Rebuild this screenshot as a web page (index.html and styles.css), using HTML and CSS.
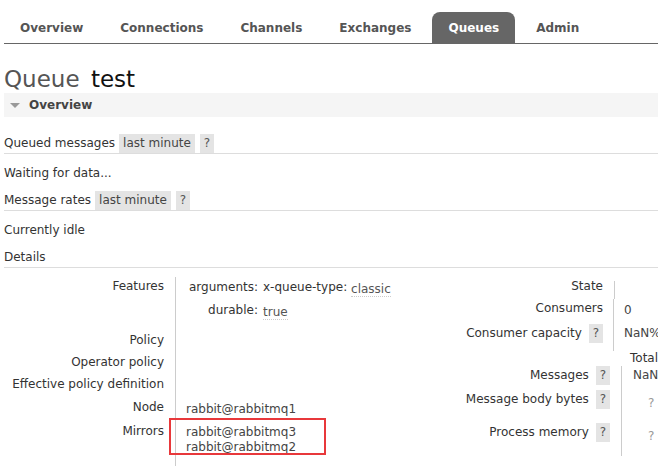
FILE: index.html
```html
<!DOCTYPE html>
<html>
<head>
<meta charset="utf-8">
<link rel="stylesheet" href="styles.css">
</head>
<body>
<div class="page">
  <nav class="tabs">
    <a class="tab">Overview</a>
    <a class="tab">Connections</a>
    <a class="tab">Channels</a>
    <a class="tab">Exchanges</a>
    <a class="tab active">Queues</a>
    <a class="tab">Admin</a>
  </nav>
  <h1 class="title"><span class="title-kind">Queue</span> <span class="title-name">test</span></h1>
  <div class="section-head"><span class="tri"></span>Overview</div>

  <div class="sub first"><span>Queued messages</span><span class="pill">last minute</span><span class="help">?</span></div>
  <p class="note">Waiting for data...</p>
  <div class="sub"><span>Message rates</span><span class="pill">last minute</span><span class="help">?</span></div>
  <p class="note">Currently idle</p>
  <div class="sub">Details</div>

  <div class="details">
    <div class="facts">
      <div class="lbl r-feat">Features</div>
      <div class="val r-feat">
        <div class="args">
          <span class="k">arguments:</span>
          <span class="v"><span class="k2">x-queue-type:</span> <span class="abbr">classic</span></span>
          <span class="k">durable:</span>
          <span class="v"><span class="abbr">true</span></span>
        </div>
      </div>
      <div class="lbl">Policy</div><div class="val"></div>
      <div class="lbl">Operator policy</div><div class="val"></div>
      <div class="lbl">Effective policy definition</div><div class="val"></div>
      <div class="lbl">Node</div><div class="val"><span class="shift">rabbit@rabbitmq1</span></div>
      <div class="lbl">Mirrors</div>
      <div class="val mirrors">
        <div class="mirror-list">rabbit@rabbitmq3<br>rabbit@rabbitmq2</div>
        <div class="mark"></div>
      </div>
    </div>

    <div class="side">
      <div class="facts2">
        <div class="lbl">State</div><div class="val first-val"></div>
        <div class="lbl">Consumers</div><div class="val"><span class="shift">0</span></div>
        <div class="lbl">Consumer capacity <span class="help">?</span></div><div class="val">NaN%</div>
      </div>
      <div class="facts3">
        <div class="hlbl"></div><div class="hval">Total</div>
        <div class="lbl">Messages <span class="help">?</span></div><div class="val">NaN</div>
        <div class="lbl">Message body bytes <span class="help">?</span></div><div class="val"><span class="unk">?</span></div>
        <div class="lbl">Process memory <span class="help">?</span></div><div class="val"><span class="unk">?</span></div>
      </div>
    </div>
  </div>
</div>
</body>
</html>
```

FILE: styles.css
```css
html, body {
  margin: 0;
  padding: 0;
  background: #fff;
  overflow: hidden;
}

body {
  font-family: "DejaVu Sans", Verdana, sans-serif;
  font-size: 12px;
  color: #333;
}

.page {
  width: 658px;
  height: 469px;
  overflow: hidden;
}

/* tabs */
.tabs {
  display: flex;
  margin: 12px 0 0 4px;
  border-bottom: 1px solid #666;
}

.tab {
  display: block;
  height: 29px;
  padding: 2px 16px 0;
  line-height: 29px;
  margin-right: 5px;
  font-weight: bold;
  color: #555;
  border-radius: 8px 8px 0 0;
  white-space: nowrap;
}

.tab.active {
  background: #666;
  color: #fff;
}

/* title */
.title {
  margin: 22px 0 0 4px;
  font-size: 23px;
  line-height: 26px;
  font-weight: normal;
  white-space: nowrap;
}

.title-kind { color: #555; }
.title-name { color: #111; margin-left: 4px; }

.section-head {
  margin: 1px 0 0 4px;
  height: 24px;
  line-height: 24px;
  background: #f5f5f5;
  font-weight: bold;
  color: #444;
  display: flex;
  align-items: center;
}

.tri {
  width: 0;
  height: 0;
  margin: 0 9px 0 6px;
  border-left: 5px solid transparent;
  border-right: 5px solid transparent;
  border-top: 5px solid #999;
}

/* sub headings */
.sub {
  margin: 8px 0 0 4px;
  height: 19px;
  line-height: 19px;
  border-bottom: 1px solid #ddd;
  display: flex;
  gap: 4px;
  white-space: nowrap;
}

.sub.first { margin-top: 17px; }

.pill {
  background: #e4e4e4;
  padding: 0 4px;
  color: #444;
}

.help {
  display: inline-block;
  background: #e4e4e4;
  padding: 0 4px;
  color: #555;
  line-height: 19px;
}

.sub .help { margin-left: 1px; }

.note {
  margin: 10px 0 0 4px;
  line-height: 19px;
}

/* details */
.details {
  display: flex;
  margin: 9px 0 0 4px;
  width: 720px;
}

.facts {
  display: grid;
  grid-template-columns: 171px 235px;
  grid-template-rows: 54px 22px 22px 23px 24px 44px;
  width: 416px;
}

.lbl {
  text-align: right;
  padding-right: 11px;
  line-height: 18px;
  white-space: nowrap;
}

.val {
  border-left: 1px solid #ccc;
  padding-left: 10px;
  line-height: 18px;
  white-space: nowrap;
  color: #444;
}

.shift {
  display: inline-block;
  padding-top: 2px;
}

.args {
  display: grid;
  grid-template-columns: 72px auto;
  column-gap: 5px;
  row-gap: 5px;
  padding-top: 1px;
}

.args .k {
  text-align: right;
  color: #333;
}

.args .k2 { color: #333; }

.abbr {
  border-bottom: 1px dotted #ccc;
  color: #555;
  position: relative;
  top: 2px;
}

.mirrors {
  position: relative;
}

.mirror-list {
  padding-top: 3px;
  line-height: 15px;
}

.mark {
  position: absolute;
  left: -7px;
  top: -4px;
  width: 153px;
  height: 33px;
  border: 2px solid #e8383b;
}

/* right side */
.side {
  display: flex;
  flex-direction: column;
}

.facts2 {
  display: grid;
  grid-template-columns: 193px 60px;
  grid-template-rows: 22px 25px 27px;
}

.facts2 .first-val {
  border-left-color: transparent;
  background: linear-gradient(#ccc, #ccc) left 4px / 1px 100% no-repeat;
}

.facts2 .lbl { padding-right: 10px; }

.facts2 .help,
.facts3 .help {
  margin-left: 3px;
}

.facts3 {
  display: grid;
  grid-template-columns: 201px 60px;
  grid-template-rows: 15px 24px 33px 33px;
}

.hlbl, .hval { line-height: 14px; }
.hval { padding-left: 9px; color: #333; }

.facts3 .val {
  padding-left: 11px;
}

.unk {
  display: inline-block;
  padding: 4px 0 0 15px;
  color: #999;
}
```
